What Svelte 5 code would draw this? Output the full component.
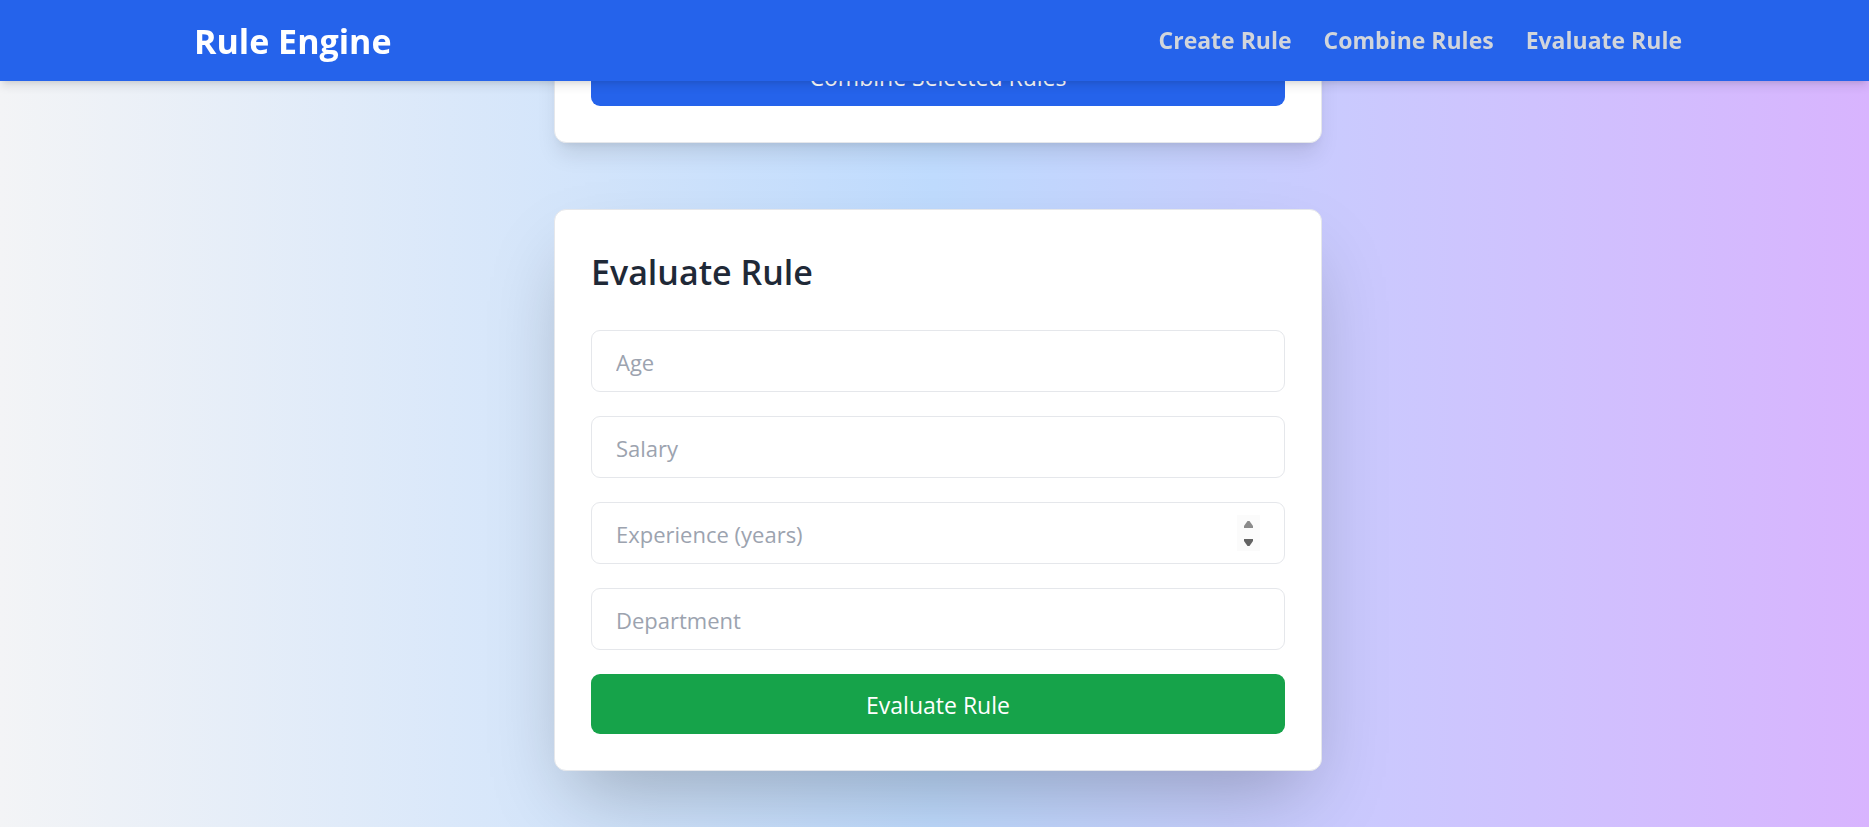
<script>
  const links = [
    { label: 'Create Rule', href: '#create' },
    { label: 'Combine Rules', href: '#combine' },
    { label: 'Evaluate Rule', href: '#evaluate' }
  ];

  let age = $state(null);
  let salary = $state(null);
  let experience = $state(null);
  let department = $state('');
</script>

<div class="page">
  <header>
    <div class="bar">
      <h1>Rule Engine</h1>
      <nav>
        {#each links as link}
          <a href={link.href}>{link.label}</a>
        {/each}
      </nav>
    </div>
  </header>

  <main>
    <section class="card" id="combine">
      <button type="button" class="blue">Combine Selected Rules</button>
    </section>

    <section class="card raised" id="evaluate">
      <h2>Evaluate Rule</h2>
      <form onsubmit={(e) => e.preventDefault()}>
        <input type="number" placeholder="Age" aria-label="Age" bind:value={age} />
        <input type="number" placeholder="Salary" aria-label="Salary" bind:value={salary} />
        <div class="field">
          <input type="number" placeholder="Experience (years)" aria-label="Experience (years)" bind:value={experience} />
          <svg class="spinner" viewBox="0 0 23 36" aria-hidden="true">
            <rect width="23" height="36" fill="#fbfbfb" />
            <path d="M10.5 6h2L16 11v2H7v-2z" fill="#8b8b8b" />
            <path d="M7 24h9v2l-3.500 5h-2L7 26z" fill="#636363" />
          </svg>
        </div>
        <input type="text" placeholder="Department" aria-label="Department" bind:value={department} />
        <button type="submit" class="green">Evaluate Rule</button>
      </form>
    </section>
  </main>
</div>

<style>
  :global(body) {
    margin: 0;
  }

  .page {
    box-sizing: border-box;
    min-height: 100vh;
    padding-left: 7px;
    background: linear-gradient(to right, #f3f4f6, #bfdbfe, #d8b4fe);
    font-family: 'Segoe UI', 'Open Sans', 'Noto Sans', sans-serif;
    font-size: 22px;
    line-height: 36px;
  }

  header {
    position: fixed;
    top: 0;
    left: 0;
    right: 0;
    z-index: 10;
    padding-left: 7px;
    background: #2563eb;
    box-shadow: 0 6px 9px -1px rgba(0, 0, 0, 0.1), 0 3px 6px -3px rgba(0, 0, 0, 0.1);
  }

  .bar {
    box-sizing: border-box;
    max-width: 1536px;
    min-height: 81px;
    margin: 0 auto;
    padding: 16px 24px;
    display: flex;
    align-items: center;
    justify-content: space-between;
  }

  h1,
  h2 {
    margin: 0;
    font-size: 34px;
    line-height: 48px;
  }

  h1 {
    color: #fff;
    font-weight: 700;
  }

  nav {
    display: flex;
    gap: 36px;
    padding-bottom: 2px;
  }

  a {
    color: #d1d5db;
    font-size: 23px;
    font-weight: 700;
    text-decoration: none;
  }

  nav {
    gap: 32px;
  }

  main {
    display: flex;
    flex-direction: column;
    align-items: center;
    gap: 66px;
    padding: 9px 0 56px;
  }

  .card {
    box-sizing: border-box;
    width: 100%;
    max-width: 768px;
    padding: 36px;
    border: 1px solid #e5e7eb;
    border-radius: 12px;
    background: #fff;
    box-shadow: 0 15px 22px -4px rgba(0, 0, 0, 0.1), 0 6px 9px -6px rgba(0, 0, 0, 0.1);
  }

  .raised {
    box-shadow: 0 37px 75px -18px rgba(0, 0, 0, 0.25);
  }

  h2 {
    margin-bottom: 32px;
    color: #1f2937;
    font-weight: 600;
    line-height: 52px;
  }

  form {
    display: grid;
    gap: 24px;
  }

  .field {
    position: relative;
  }

  input {
    box-sizing: border-box;
    display: block;
    width: 100%;
    height: 62px;
    padding: 13px 24px 11px;
    border: 1px solid #e5e7eb;
    border-radius: 9px;
    background: #fff;
    color: #1f2937;
    font: inherit;
    appearance: textfield;
  }

  input::placeholder {
    color: #9ca3af;
    opacity: 1;
  }

  .spinner {
    position: absolute;
    top: 13px;
    right: 25px;
    width: 23px;
    height: 36px;
  }

  button {
    display: block;
    width: 100%;
    padding: 13px 24px 11px;
    border: 0;
    border-radius: 9px;
    color: #fff;
    font: inherit;
    font-size: 23px;
    cursor: pointer;
  }

  .blue {
    background: #2563eb;
  }

  .green {
    background: #16a34a;
  }
</style>
